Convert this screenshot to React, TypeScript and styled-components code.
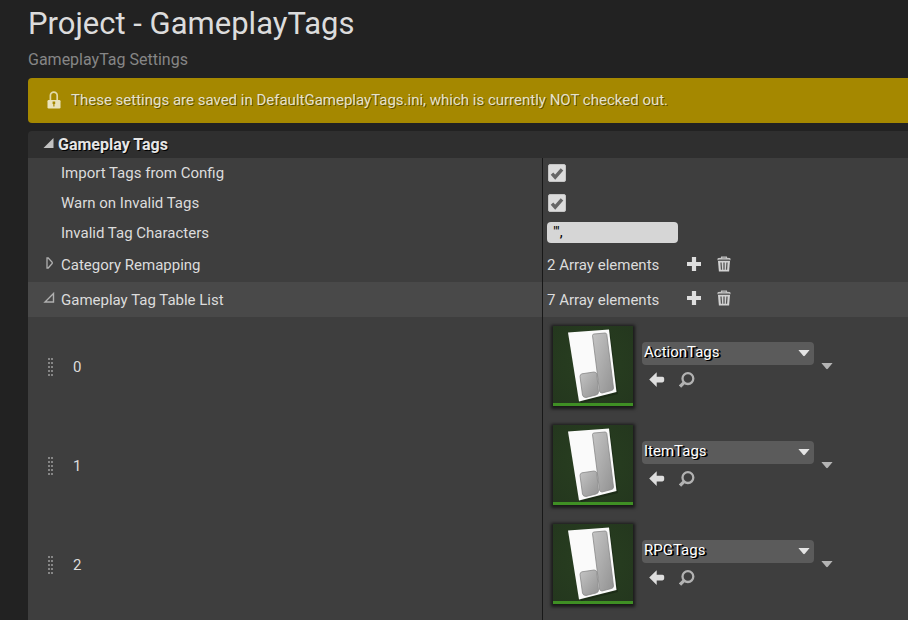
import React from "react";
import styled, { createGlobalStyle } from "styled-components";

const GlobalStyle = createGlobalStyle`
  *, *::before, *::after { box-sizing: border-box; }
  body {
    margin: 0;
    background: #222222;
    color: #dcdcdc;
    font-family: Roboto, "Liberation Sans", sans-serif;
    font-size: 15px;
    line-height: 20px;
  }
  button, input, select { font: inherit; color: inherit; }
`;

const Page = styled.main`
  display: flex;
  flex-direction: column;
  height: 100vh;
  padding: 4px 0 0 28px;
  overflow: hidden;
`;

const Title = styled.h1`
  margin: 0;
  font-size: 31px;
  line-height: 40px;
  font-weight: 400;
`;

const Subtitle = styled.p`
  margin: 6px 0 8px;
  font-size: 16px;
  line-height: 20px;
  color: #868686;
`;

const Notice = styled.div`
  display: flex;
  align-items: center;
  flex-shrink: 0;
  gap: 10px;
  height: 45px;
  padding: 0 0 2px 19px;
  border-radius: 4px 0 0 4px;
  background: #a58800;
  color: #e6e2cc;
  text-shadow: 1px 1px 0 rgba(0, 0, 0, 0.45);
`;

const Panel = styled.section`
  display: flex;
  flex-direction: column;
  flex: 1 0 auto;
  margin-top: 8px;
`;

const PanelHeader = styled.h2`
  display: flex;
  align-items: center;
  height: 27px;
  margin: 0;
  padding-left: 15px;
  border-radius: 4px 0 0 0;
  background: #2f2f2f;
  color: #e6e6e6;
  font-size: 16px;
  font-weight: 700;
  text-shadow: 1px 1px 0 #000;
`;

const Row = styled.div<{ $height: number; $highlight?: boolean }>`
  display: grid;
  grid-template-columns: 514fr 366fr;
  min-height: ${(p) => p.$height}px;
  background: ${(p) => (p.$highlight ? "#494949" : "#3e3e3e")};
`;

const Filler = styled(Row)`
  flex: 1;
`;

const NameCell = styled.div`
  display: flex;
  align-items: center;
  min-width: 0;
  padding-left: 15px;
`;

const ValueCell = styled.div<{ $inset?: number }>`
  display: flex;
  align-items: center;
  min-width: 0;
  border-left: 1px solid #181818;
  padding-left: ${(p) => p.$inset ?? 4}px;
`;

const Gutter = styled.span`
  display: flex;
  width: 18px;
  flex-shrink: 0;
`;

const ToolButton = styled.button`
  display: flex;
  align-items: center;
  justify-content: center;
  flex-shrink: 0;
  padding: 0;
  border: 0;
  background: none;
  color: #dcdcdc;
  cursor: pointer;
`;

const Expander = styled(ToolButton)`
  width: 15px;
  height: 16px;
  align-items: flex-start;
  justify-content: flex-start;
`;

const CheckFrame = styled.span`
  display: grid;
  width: 18px;
  height: 18px;

  > * { grid-area: 1 / 1; }
  svg { pointer-events: none; z-index: 1; }
  input:not(:checked) + svg { visibility: hidden; }
`;

const Check = styled.input`
  appearance: none;
  width: 18px;
  height: 18px;
  margin: 0;
  border: 1px solid #c4c4c4;
  border-radius: 2px;
  background: #dcdcdc;
`;

const TextBox = styled.input`
  width: 131px;
  height: 21px;
  padding: 0 6px 1px;
  border: 0;
  border-radius: 4px;
  background: #d6d6d6;
  color: #000;
`;

const Count = styled.span`
  width: 139px;
`;

const ArrayTools = styled.span`
  display: flex;
  gap: 14px;
  padding-bottom: 3px;
`;

const Index = styled.span`
  padding-left: 12px;
`;

const Thumbnail = styled.div`
  flex-shrink: 0;
  width: 80px;
  height: 80px;
  margin-bottom: 1px;
  border-bottom: 3px solid #3f8f24;
  background: radial-gradient(circle, #283f20 0%, #24371e 100%);
  box-shadow: 0 1px 3px 2px rgba(0, 0, 0, 0.6);
`;

const AssetControls = styled.div`
  display: flex;
  flex-direction: column;
  gap: 7px;
  margin-left: 9px;
  padding-bottom: 3px;
`;

const ComboFrame = styled.div`
  display: grid;
  align-items: center;
  width: 172px;
  height: 23px;

  > * { grid-area: 1 / 1; }
  svg { justify-self: end; margin-right: 4px; pointer-events: none; }
`;

const Combo = styled.select`
  appearance: none;
  width: 100%;
  height: 23px;
  padding: 0 24px 3px 2px;
  border: 0;
  border-radius: 4px;
  background: #5b5b5b;
  color: #fff;
  text-shadow: 1px 1px 0 #000, 2px 1px 0 #000;
`;

const AssetActions = styled.div`
  display: flex;
  gap: 14px;
  padding-left: 7px;
`;

const MenuButton = styled(ToolButton)`
  margin: 0 0 1px 7px;
`;

const GripWrap = styled.span`
  display: flex;
  padding-left: 5px;
`;

const LockIcon = () => (
  <svg width="14" height="18" viewBox="0 0 14 18" aria-hidden="true">
    <path d="M3.4 9V4.6a3.4 3.4 0 0 1 6.8 0V9" fill="none" stroke="#e2d9a8" strokeWidth="1.7" />
    <rect x="0.5" y="9" width="13" height="8.5" rx="1.2" fill="#eae3bd" />
    <path d="M5.6 10.6h2.6v2.4h-.7v2.4H6.3V13h-.7z" fill="#a58800" />
  </svg>
);

const SolidExpander = () => (
  <svg width="11" height="12" viewBox="0 0 11 12" aria-hidden="true">
    <path d="M10.500 1v10H.5z" fill="#c2c2c2" />
  </svg>
);

const OpenExpander = () => (
  <svg width="12" height="12" viewBox="0 0 12 12" aria-hidden="true">
    <path d="M10.500 1.500v8.500h-8.500z" fill="none" stroke="#b0b0b0" strokeWidth="1.400" />
  </svg>
);

const ClosedExpander = () => (
  <svg width="12" height="12" viewBox="0 0 12 12" aria-hidden="true">
    <path d="M4 1h1.200l4 4.300v1.200l-4 4.500H4z" fill="none" stroke="#b0b0b0" strokeWidth="1.300" />
  </svg>
);

const CheckIcon = () => (
  <svg width="18" height="18" viewBox="0 0 18 18" aria-hidden="true">
    <path d="M4 9.6l3.2 3.6L14 5.4" fill="none" stroke="#666" strokeWidth="3.4" />
  </svg>
);

const PlusIcon = () => (
  <svg width="16" height="16" viewBox="0 0 16 16" aria-hidden="true">
    <path d="M5.900 1h4.200v4.900H15v4.200h-4.900V15H5.900v-4.900H1V5.900h4.900z" fill="#dedede" />
  </svg>
);

const TrashIcon = () => (
  <svg width="16" height="16" viewBox="0 0 16 16" aria-hidden="true">
    <path d="M1.500 4.300V3q0-1 1-1.100L5 1.700V.6h6v1.100l2.500.2q1 .1 1 1.100v1.300z" fill="#c4c4c4" />
    <path d="M6.200 1.900h3.600M2.500 3.500h11" stroke="#6a6a6a" strokeWidth=".6" />
    <path d="M2 5h12l-.9 10.500H2.900z" fill="#d2d2d2" />
    <path d="M5 6.500l.5 7.300M8 6.500v7.300M11 6.500l-.5 7.300" stroke="#555" strokeWidth="1.300" fill="none" />
  </svg>
);

const GripIcon = () => (
  <svg width="6" height="18" viewBox="0 0 6 18" aria-hidden="true">
    {[0, 4, 8, 12, 16].map((y) => (
      <path key={y} d={`M0 ${y}h2v2H0zM3 ${y}h2v2H3z`} fill="#868686" />
    ))}
  </svg>
);

const DownIcon = ({ fill = "#e4e4e4" }: { fill?: string }) => (
  <svg width="12" height="7" viewBox="0 0 12 7" aria-hidden="true">
    <path d="M.8 0h10.400v.6L6.800 5.800q-.8.700-1.600 0L.8.6z" fill={fill} />
  </svg>
);

const UseIcon = () => (
  <svg width="16" height="16" viewBox="0 0 16 16" aria-hidden="true">
    <path d="M.2 7.600L7.700.2V4.800H13.400a1.800 1.800 0 0 1 1.800 1.800v2a1.800 1.800 0 0 1-1.800 1.800H7.700V15z" fill="#dedede" />
  </svg>
);

const BrowseIcon = () => (
  <svg width="16" height="16" viewBox="0 0 16 16" aria-hidden="true">
    <circle cx="8.900" cy="6.600" r="5.400" fill="none" stroke="#b2b2b2" strokeWidth="2.300" />
    <path d="M5 10.600L1 14.600" stroke="#b2b2b2" strokeWidth="3.200" />
  </svg>
);

const DataTableArt = ({ id }: { id: number }) => (
  <svg width="80" height="77" viewBox="0 0 80 77" aria-hidden="true">
    <defs>
      <linearGradient id={`metal-${id}`} x1="0" y1="0" x2="1" y2="1">
        <stop offset="0" stopColor="#c4c4c4" />
        <stop offset="1" stopColor="#929292" />
      </linearGradient>
    </defs>
    <path d="M17 8L57 5l8 63-37 9z" fill="#142010" opacity=".5" />
    <path d="M15 6.5L56 3.5 63.5 66 26 75.5z" fill="#fafafa" />
    <path
      d="M39.500 9.500q0-1.200 1.500-1.500l11-1q1.500 0 1.800 1.500L60.500 62q0 2-2 2.500l-9.500 2.500q-2 0-2.500-2z"
      fill={`url(#metal-${id})`}
      stroke="#888"
      strokeWidth=".8"
    />
    <path
      d="M27 50.500q0-2.200 2-2.700l12-1.800q2.300 0 2.800 2l1.700 18q0 2.500-2.500 3L33 71.500q-3 0-3.500-2.500z"
      fill={`url(#metal-${id})`}
      stroke="#888"
      strokeWidth=".8"
    />
  </svg>
);

const assets = ["ActionTags", "ItemTags", "RPGTags"];

const ArrayValue = ({ count }: { count: number }) => (
  <ValueCell>
    <Count>{count} Array elements</Count>
    <ArrayTools>
      <ToolButton aria-label="Add element"><PlusIcon /></ToolButton>
      <ToolButton aria-label="Remove all elements"><TrashIcon /></ToolButton>
    </ArrayTools>
  </ValueCell>
);

const CheckRow = ({ id, label, height }: { id: string; label: string; height: number }) => (
  <Row $height={height}>
    <NameCell>
      <Gutter />
      <label htmlFor={id}>{label}</label>
    </NameCell>
    <ValueCell $inset={5}>
      <CheckFrame>
        <Check id={id} type="checkbox" defaultChecked />
        <CheckIcon />
      </CheckFrame>
    </ValueCell>
  </Row>
);

const AssetRow = ({ index, name }: { index: number; name: string }) => (
  <Row $height={99}>
    <NameCell>
      <Gutter><GripWrap><GripIcon /></GripWrap></Gutter>
      <Index>{index}</Index>
    </NameCell>
    <ValueCell $inset={10}>
      <Thumbnail><DataTableArt id={index} /></Thumbnail>
      <AssetControls>
        <ComboFrame>
          <Combo aria-label={`Element ${index}`} defaultValue={name}>
            {assets.map((a) => <option key={a}>{a}</option>)}
          </Combo>
          <DownIcon />
        </ComboFrame>
        <AssetActions>
          <ToolButton aria-label="Use selected asset"><UseIcon /></ToolButton>
          <ToolButton aria-label="Browse to asset"><BrowseIcon /></ToolButton>
        </AssetActions>
      </AssetControls>
      <MenuButton aria-label="Element options"><DownIcon fill="#b4b4b4" /></MenuButton>
    </ValueCell>
  </Row>
);

export default function App() {
  return (
    <>
      <GlobalStyle />
      <Page>
        <Title>Project - GameplayTags</Title>
        <Subtitle>GameplayTag Settings</Subtitle>
        <Notice role="status">
          <LockIcon />
          <span>These settings are saved in DefaultGameplayTags.ini, which is currently NOT checked out.</span>
        </Notice>
        <Panel>
          <PanelHeader>
            <Expander aria-label="Collapse Gameplay Tags"><SolidExpander /></Expander>
            Gameplay Tags
          </PanelHeader>
          <CheckRow id="import-tags" label="Import Tags from Config" height={30} />
          <CheckRow id="warn-invalid" label="Warn on Invalid Tags" height={29} />
          <Row $height={31}>
            <NameCell>
              <Gutter />
              <label htmlFor="invalid-chars">Invalid Tag Characters</label>
            </NameCell>
            <ValueCell>
              <TextBox id="invalid-chars" type="text" defaultValue={"\"',"} />
            </ValueCell>
          </Row>
          <Row $height={34}>
            <NameCell>
              <Gutter>
                <Expander aria-label="Expand Category Remapping"><ClosedExpander /></Expander>
              </Gutter>
              <span>Category Remapping</span>
            </NameCell>
            <ArrayValue count={2} />
          </Row>
          <Row $height={35} $highlight>
            <NameCell>
              <Gutter>
                <Expander aria-label="Collapse Gameplay Tag Table List"><OpenExpander /></Expander>
              </Gutter>
              <span>Gameplay Tag Table List</span>
            </NameCell>
            <ArrayValue count={7} />
          </Row>
          {assets.map((name, i) => <AssetRow key={name} index={i} name={name} />)}
          <Filler $height={6}>
            <NameCell />
            <ValueCell />
          </Filler>
        </Panel>
      </Page>
    </>
  );
}
